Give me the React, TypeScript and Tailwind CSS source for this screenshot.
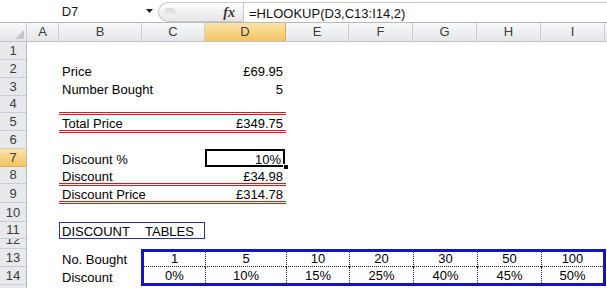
const colHeads = [
  { l: "A", w: "w-[32px]", on: false },
  { l: "B", w: "w-[83px]", on: false },
  { l: "C", w: "w-[63px]", on: false },
  { l: "D", w: "w-[81px]", on: true },
  { l: "E", w: "w-[63px]", on: false },
  { l: "F", w: "w-[64px]", on: false },
  { l: "G", w: "w-[64px]", on: false },
  { l: "H", w: "w-[64px]", on: false },
  { l: "I", w: "w-[64px]", on: false },
]

const rowHeads = [
  { n: 1, h: "h-[18px]" },
  { n: 2, h: "h-[18px]" },
  { n: 3, h: "h-[18px]" },
  { n: 4, h: "h-[17px]" },
  { n: 5, h: "h-[18px]" },
  { n: 6, h: "h-[18px]" },
  { n: 7, h: "h-[18px]" },
  { n: 8, h: "h-[17px]" },
  { n: 9, h: "h-[19px]" },
  { n: 10, h: "h-[19px]" },
  { n: 11, h: "h-[17px]" },
  { n: 12, h: "h-[10px]" },
  { n: 13, h: "h-[18px]" },
  { n: 14, h: "h-[18px]" },
  { n: 15, h: "h-[18px]" },
]

const bought = ["1", "5", "10", "20", "30", "50", "100"]
const discounts = ["0%", "10%", "15%", "25%", "40%", "45%", "50%"]

function ValueRow({ h, label, value }: { h: string; label: string; value: string }) {
  return (
    <div className={`flex ${h}`}>
      <div className="w-[32px]" />
      <div className="flex w-[83px] items-end whitespace-nowrap pl-[3px]">{label}</div>
      <div className="w-[63px]" />
      <div className="flex w-[81px] items-end justify-end pr-[3px]">{value}</div>
    </div>
  )
}

function DoubleRule() {
  return (
    <div className="flex h-[3px] flex-col justify-between">
      <div className="h-[1px] bg-[#e0161d]" />
      <div className="h-[1px] bg-[#e0161d]" />
    </div>
  )
}

// label/value pair framed by a double red rule above and below
function TotalRow({ label, value }: { label: string; value: string }) {
  return (
    <div className="flex h-[21px]">
      <div className="w-[32px]" />
      <div className="flex w-[227px] flex-col">
        <DoubleRule />
        <div className="flex flex-1 items-end justify-between px-[3px]">
          <span>{label}</span>
          <span>{value}</span>
        </div>
        <DoubleRule />
      </div>
    </div>
  )
}

export default function App() {
  return (
    <div className="h-[288px] w-[607px] overflow-hidden bg-white font-['Liberation_Sans',Arial,sans-serif] text-[13px] leading-[13px] text-black">
      {/* formula bar */}
      <div className="flex h-[23px] border-b border-[#b9b9b9] bg-white">
        <div className="flex w-[140px] items-center justify-center pt-[1px] text-[#1b1b1b]">D7</div>
        <div className="flex w-[18px] items-center justify-center">
          <svg width="7" height="4" viewBox="0 0 7 4">
            <polygon points="0,0 7,0 3.5,4" fill="#202020" />
          </svg>
        </div>
        <div className="mt-[2px] flex h-[20px] w-[85px] items-center rounded-l-full border border-r-0 border-[#c8c8c8] bg-gradient-to-b from-[#fdfdfd] to-[#e6e6e6] pl-[5px]">
          <div className="h-[9px] w-[12px] rounded-full bg-gradient-to-b from-[#d9d9d9] to-[#f4f4f4]" />
          <span className="ml-auto mr-[8px] font-['Liberation_Serif',serif] text-[14px] font-bold italic text-[#3a3a3a]">
            fx
          </span>
        </div>
        <div className="mt-[2px] flex h-[20px] flex-1 items-center border-t border-l border-[#c8c8c8] pl-[5px] pt-[1px] text-[#111]">
          =HLOOKUP(D3,C13:I14,2)
        </div>
      </div>

      {/* column headers */}
      <div className="flex h-[19px] border-b border-[#c0c3c8] bg-gradient-to-b from-[#f8f9fa] to-[#e4e6ea] text-[#3c3c3c]">
        <div className="flex w-[27px] items-end justify-end border-r border-[#c9ccd1] p-[2px]">
          <svg width="9" height="9" viewBox="0 0 9 9">
            <polygon points="9,0 9,9 0,9" fill="#c3c6cb" />
          </svg>
        </div>
        {colHeads.map((c) => (
          <div
            key={c.l}
            className={`flex ${c.w} items-end justify-center border-r pb-[3px] ${
              c.on
                ? "border-[#e3a94a] bg-gradient-to-b from-[#fbe3a8] to-[#f4c45e]"
                : "border-[#ccced2]"
            }`}
          >
            {c.l}
          </div>
        ))}
        <div className="flex-1" />
      </div>

      <div className="flex">
        {/* row headers */}
        <div className="flex w-[27px] flex-col border-r border-[#b5b9c0] bg-[#e7e9ed] text-[#3c3c3c]">
          {rowHeads.map((r) => (
            <div
              key={r.n}
              className={`flex ${r.h} items-end justify-center overflow-hidden border-b pb-[2px] ${
                r.n === 7
                  ? "border-[#e3a94a] bg-gradient-to-b from-[#fbe3a8] to-[#f4c45e]"
                  : "border-[#c9ccd2]"
              }`}
            >
              {r.n}
            </div>
          ))}
        </div>

        {/* cells */}
        <div className="flex flex-1 flex-col">
          <div className="h-[18px]" />
          <ValueRow h="h-[18px]" label="Price" value="£69.95" />
          <ValueRow h="h-[18px]" label="Number Bought" value="5" />
          <div className="h-[16px]" />
          <TotalRow label="Total Price" value="£349.75" />
          <div className="h-[16px]" />

          <div className="flex h-[18px]">
            <div className="w-[32px]" />
            <div className="flex w-[83px] items-end pb-[1px] pl-[3px]">Discount %</div>
            <div className="w-[63px]" />
            <div className="relative z-10 flex w-[81px] items-end justify-end pb-[1px] pr-[5px]">
              10%
              <div className="absolute top-0 bottom-0 left-0 right-[1px] border-2 border-black" />
              <div className="absolute -right-[3px] -bottom-[3px] h-[6px] w-[6px] border border-white bg-black" />
            </div>
          </div>

          <ValueRow h="h-[16px]" label="Discount" value="£34.98" />
          <TotalRow label="Discount Price" value="£314.78" />
          <div className="h-[18px]" />

          <div className="flex h-[17px]">
            <div className="w-[32px]" />
            <div className="flex w-[146px] border border-[#2a30a8]">
              <div className="flex w-[82px] items-end pl-[2px]">DISCOUNT</div>
              <div className="flex flex-1 items-end pl-[3px]">TABLES</div>
            </div>
          </div>
          <div className="h-[10px]" />

          <div className="flex h-[37px]">
            <div className="w-[32px]" />
            <div className="flex w-[83px] flex-col">
              <div className="flex h-[18px] items-end pb-[1px] pl-[3px]">No. Bought</div>
              <div className="flex h-[18px] items-end pb-[1px] pl-[3px]">Discount</div>
            </div>
            <div className="-ml-[1px] grid h-[37px] w-[465px] grid-cols-[61px_81px_63px_64px_64px_64px_62px] grid-rows-[15px_16px] border-[3px] border-[#1414c4]">
              {bought.map((v, i) => (
                <div
                  key={"b" + v}
                  className={`flex items-end justify-center border-b border-dotted border-[#222] pb-[1px] ${
                    i > 0 ? "border-l" : ""
                  }`}
                >
                  {v}
                </div>
              ))}
              {discounts.map((v, i) => (
                <div
                  key={"d" + v}
                  className={`flex items-end justify-center border-dotted border-[#222] pb-[1px] ${
                    i > 0 ? "border-l" : ""
                  }`}
                >
                  {v}
                </div>
              ))}
            </div>
          </div>
        </div>
      </div>
    </div>
  )
}
